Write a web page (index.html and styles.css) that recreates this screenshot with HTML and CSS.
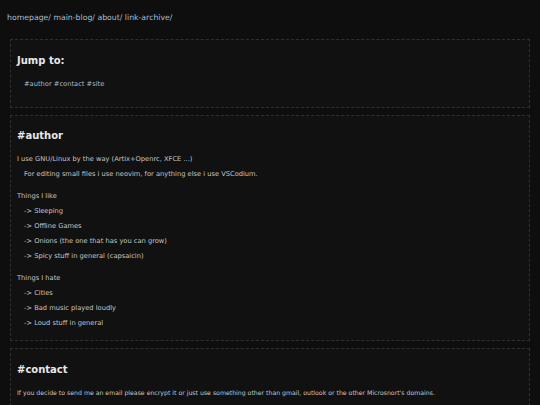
FILE: index.html
```html
<!DOCTYPE html>
<html>
<head>
<meta charset="utf-8">
<link rel="stylesheet" href="styles.css">
</head>
<body>
<nav class="nav"><a href="#">homepage/</a> <a href="#">main-blog/</a> <a href="#">about/</a> <a href="#">link-archive/</a></nav>

<section class="box box-jump">
  <h2 class="title">Jump to:</h2>
  <p class="line indent"><a href="#author">#author</a> <a href="#contact">#contact</a> <a href="#site">#site</a></p>
</section>

<section class="box box-author">
  <h2 class="title">#author</h2>
  <div class="group">
    <p class="line">I use GNU/Linux by the way (Artix+Openrc, XFCE ...)</p>
    <p class="line indent">For editing small files i use neovim, for anything else i use VSCodium.</p>
  </div>
  <div class="group">
    <p class="line">Things I like</p>
    <p class="line indent">-&gt; Sleeping</p>
    <p class="line indent">-&gt; Offline Games</p>
    <p class="line indent">-&gt; Onions (the one that has you can grow)</p>
    <p class="line indent">-&gt; Spicy stuff in general (capsaicin)</p>
  </div>
  <div class="group">
    <p class="line">Things I hate</p>
    <p class="line indent">-&gt; Cities</p>
    <p class="line indent">-&gt; Bad music played loudly</p>
    <p class="line indent">-&gt; Loud stuff in general</p>
  </div>
</section>

<section class="box box-contact">
  <h2 class="title">#contact</h2>
  <p class="line contact-text">If you decide to send me an email please encrypt it or just use something other than gmail, outlook or the other Microsnort's domains.</p>
</section>
</body>
</html>
```

FILE: styles.css
```css
html, body {
  margin: 0;
  padding: 0;
  background: #0e0e0e;
}
body {
  padding-top: 12px;
  font-family: "DejaVu Sans", Verdana, sans-serif;
  color: #c6c6c6;
  overflow: hidden;
}
a {
  color: #a9bccb;
  text-decoration: none;
}
.nav {
  padding-left: 7px;
  font-size: 7.75px;
  line-height: 12px;
  height: 12px;
  margin-bottom: 15px;
}
.box {
  margin: 0 10px 7px 10px;
  border: 1px dashed #303030;
  background: #111111;
  padding: 14px 6px 15px 6px;
}
.title {
  margin: 0;
  font-size: 10px;
  line-height: 14px;
  font-weight: bold;
  color: #e8e8e8;
}
.line {
  margin: 0;
  font-size: 6.7px;
  line-height: 15px;
}
.contact-text {
  font-size: 6.2px;
}
.indent {
  padding-left: 7px;
}
.box-jump .title {
  margin-bottom: 9px;
}
.box-author {
  padding-top: 13px;
  padding-bottom: 9px;
}
.box-author .title {
  margin-bottom: 9px;
}
.group {
  margin-top: 7px;
}
.box-contact .title {
  margin-bottom: 8px;
}
```
